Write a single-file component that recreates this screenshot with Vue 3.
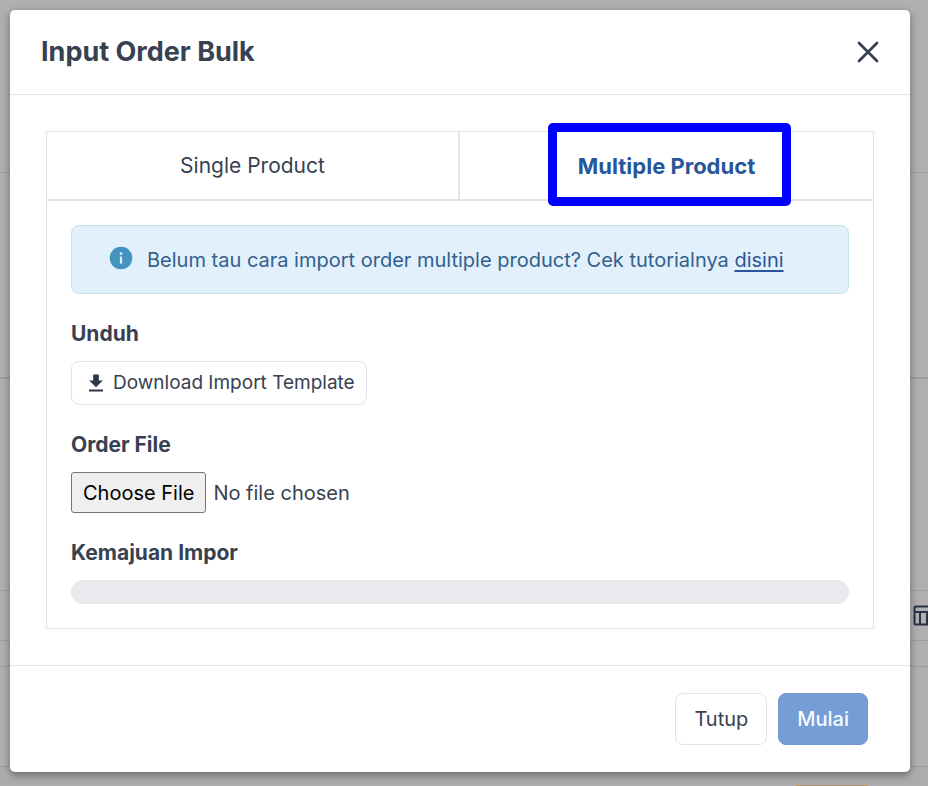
<script setup>
import { ref } from 'vue'

const tabs = [
  { id: 'single', label: 'Single Product' },
  { id: 'multiple', label: 'Multiple Product' },
]
const active = ref('multiple')
const progress = ref(0)
</script>

<template>
  <div class="screen">
    <div class="page" aria-hidden="true">
      <div class="band band-top"></div>
      <div class="band band-filter"></div>
      <div class="band band-gap"></div>
      <div class="band band-toolbar">
        <svg class="columns-icon" width="22" height="22" viewBox="0 0 22 22" fill="none" stroke="#2b3444" stroke-width="2">
          <rect x="1.5" y="1.5" width="19" height="18" rx="1" />
          <path d="M1 7h20M7 7v13M14 7v13" />
        </svg>
      </div>
      <div class="band band-head"></div>
      <div class="band band-rows"></div>
      <div class="band band-bottom"><span class="badge"></span></div>
    </div>

    <section class="modal" role="dialog" aria-labelledby="modal-title">
      <header class="modal-header">
        <h1 id="modal-title">Input Order Bulk</h1>
        <button class="close" type="button" aria-label="Close">
          <svg width="22" height="22" viewBox="0 0 22 22" fill="none" stroke="#374151" stroke-width="2.8" stroke-linecap="round">
            <path d="M2 2l18 18M20 2L2 20" />
          </svg>
        </button>
      </header>

      <div class="modal-body">
        <div class="card">
          <div class="tabs" role="tablist">
            <button
              v-for="tab in tabs"
              :key="tab.id"
              type="button"
              role="tab"
              class="tab"
              :class="{ active: active === tab.id }"
              :aria-selected="active === tab.id"
              @click="active = tab.id"
            >
              <span class="tab-label">{{ tab.label }}</span>
            </button>
          </div>

          <div class="panel">
            <div class="alert">
              <svg class="info" width="24" height="24" viewBox="0 0 24 24">
                <circle cx="12" cy="12" r="11.3" fill="#4393c0" />
                <circle cx="12" cy="7.6" r="1.4" fill="#e2f0fb" />
                <rect x="10.9" y="10.6" width="2.2" height="7" fill="#e2f0fb" />
              </svg>
              <p>Belum tau cara import order multiple product? Cek tutorialnya <a href="#">disini</a></p>
            </div>

            <div class="field">
              <h2>Unduh</h2>
              <button class="btn download" type="button">
                <svg width="16" height="18" viewBox="0 0 16 18" fill="#2d3748">
                  <path d="M5.2 0.5h5.6v6h4L8 13.2 1.2 6.5h4zM1 15.4h14v2H1z" />
                </svg>
                Download Import Template
              </button>
            </div>

            <div class="field">
              <label for="order-file">Order File</label>
              <input id="order-file" class="file" type="file" />
            </div>

            <div class="field">
              <h2 id="progress-title">Kemajuan Impor</h2>
              <div class="progress" role="progressbar" aria-labelledby="progress-title" :aria-valuenow="progress">
                <div class="progress-bar" :style="{ width: progress + '%' }"></div>
              </div>
            </div>
          </div>
        </div>
      </div>

      <footer class="modal-footer">
        <button class="btn action" type="button">Tutup</button>
        <button class="btn action primary" type="button">Mulai</button>
      </footer>
    </section>
  </div>
</template>

<style>
body {
  background: #b0b0b0;
}
</style>

<style scoped>
* {
  box-sizing: border-box;
}
.screen {
  display: grid;
  min-height: 100vh;
  overflow: hidden;
  font-family: Inter, 'Liberation Sans', sans-serif;
  font-size: 20px;
  line-height: 24px;
  color: #374151;
}
.page,
.modal {
  grid-area: 1 / 1;
}
.page {
  display: flex;
  flex-direction: column;
  min-width: 0;
}
.band {
  border-bottom: 1px solid #9d9d9d;
}
.band-top { height: 173px; }
.band-filter { height: 206px; border-bottom: 2px solid #9d9d9d; }
.band-gap { height: 212px; }
.band-toolbar {
  display: flex;
  justify-content: flex-end;
  align-items: center;
  height: 50px;
}
.columns-icon {
  flex: none;
  margin-right: -7px;
}
.band-head { height: 26px; }
.band-rows { height: 100px; }
.band-bottom {
  flex: 1;
  display: flex;
  justify-content: flex-end;
  align-items: flex-end;
  border: 0;
  background: #acacac;
}
.badge {
  width: 72px;
  height: 1px;
  margin-right: 60px;
  background: #b29468;
}
.modal {
  z-index: 1;
  align-self: start;
  margin: 10px 18px 14px 10px;
  border-radius: 5px;
  background: #fff;
  box-shadow: 0 3px 8px rgba(0, 0, 0, 0.4);
}
.modal-header {
  display: flex;
  align-items: center;
  justify-content: space-between;
  height: 85px;
  padding: 0 31px;
  border-bottom: 1px solid #e2e2e4;
}
h1 {
  margin: 0;
  font-size: 27px;
  line-height: 32px;
  font-weight: 700;
}
button {
  font: inherit;
  color: inherit;
  cursor: pointer;
}
.close {
  display: flex;
  padding: 0;
  border: 0;
  background: none;
}
.modal-body {
  padding: 36px;
}
.card {
  border: 1px solid #e3e3e5;
}
.tabs {
  display: grid;
  grid-template-columns: 1fr 1fr;
  border-bottom: 2px solid #e3e3e5;
}
.tab {
  height: 67px;
  padding: 0;
  border: 0;
  background: none;
  font-size: 21px;
}
.tab:first-child {
  border-right: 2px solid #e3e3e5;
}
.tab.active {
  font-size: 22px;
  font-weight: 700;
  color: #27569b;
}
.tab-label {
  position: relative;
}
.tab.active .tab-label::after {
  content: '';
  position: absolute;
  inset: -30px -36px -27px -30px;
  border: 9px solid #0000fe;
  border-radius: 5px;
}
.panel {
  display: flex;
  flex-direction: column;
  gap: 28px;
  padding: 24px;
}
.alert {
  display: flex;
  align-items: center;
  gap: 14px;
  min-height: 69px;
  padding: 0 37px;
  border: 1px solid #c9e2ea;
  border-radius: 8px;
  background: #e2f0fb;
  color: #32618d;
}
.info {
  flex: none;
  margin-bottom: 4px;
}
.alert p {
  margin: 0;
}
.alert a {
  color: #2a5699;
  text-decoration-thickness: 2px;
  text-underline-offset: 3px;
}
.field {
  display: flex;
  flex-direction: column;
  align-items: flex-start;
  gap: 15px;
}
.field h2,
.field label {
  margin: 0;
  font-size: 21px;
  line-height: 24px;
  font-weight: 700;
}
.btn {
  border: 1px solid #e2e3e6;
  border-radius: 8px;
  background: #fff;
}
.download {
  display: flex;
  align-items: center;
  gap: 9px;
  height: 44px;
  padding: 0 11px 0 16px;
  font-size: 19px;
}
.file {
  width: 100%;
  height: 41px;
  font: inherit;
  color: inherit;
}
.file::file-selector-button {
  height: 41px;
  margin: 0 7px 0 0;
  padding: 0 11px;
  border: 1px solid #767676;
  border-radius: 3px;
  background: #efefef;
  color: #000;
  font: inherit;
}
.progress {
  width: 100%;
  height: 24px;
  border-radius: 12px;
  overflow: hidden;
  background: #e9eaee;
}
.progress-bar {
  height: 100%;
  background: #769dd6;
}
.modal-footer {
  display: flex;
  justify-content: flex-end;
  gap: 11px;
  padding: 27px 42px;
  border-top: 1px solid #e2e2e4;
}
.action {
  height: 52px;
  padding: 0 18px;
}
.primary {
  border-color: #6f98d3;
  background: #769dd6;
  color: #f5f9ff;
  font-weight: 500;
}
</style>
